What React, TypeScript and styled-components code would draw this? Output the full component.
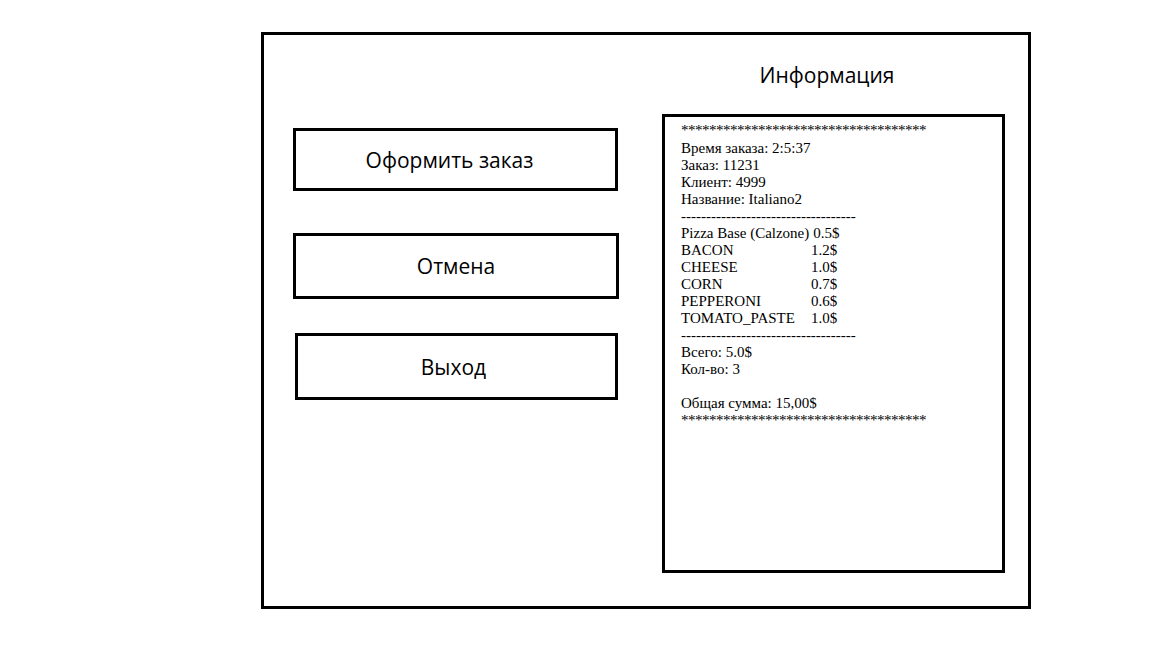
import React from "react";
import styled, { createGlobalStyle } from "styled-components";

const Global = createGlobalStyle`
  html, body { margin: 0; padding: 0; background: #ffffff; }
  body { font-family: "Open Sans", "Noto Sans", sans-serif; color: #000; }
`;

const Page = styled.div`
  width: 1152px;
  height: 648px;
  box-sizing: border-box;
  padding: 32px 0 0 261px;
`;

const Frame = styled.div`
  width: 770px;
  height: 577px;
  box-sizing: border-box;
  border: 3px solid #000;
  padding: 0 23px 33px 29px;
  display: flex;
  justify-content: space-between;
`;

const LeftColumn = styled.div`
  width: 326px;
  padding-top: 93px;
  display: flex;
  flex-direction: column;
`;

const ActionButton = styled.div<{
  $h: number;
  $top: number;
  $indent?: number;
  $w?: number;
  $shift?: number;
}>`
  box-sizing: border-box;
  height: ${(p) => p.$h}px;
  margin-top: ${(p) => p.$top}px;
  margin-left: ${(p) => p.$indent ?? 0}px;
  width: ${(p) => p.$w ?? 325}px;
  padding-right: ${(p) => p.$shift ?? 0}px;
  border: 3px solid #000;
  display: flex;
  align-items: center;
  justify-content: center;
  font-family: "Open Sans", "Noto Sans", sans-serif;
  font-size: 21px;
  color: #000;
`;

const RightColumn = styled.div`
  width: 343px;
  display: flex;
  flex-direction: column;
`;

const Title = styled.div`
  height: 79px;
  box-sizing: border-box;
  padding: 27px 13px 0 0;
  text-align: center;
  font-family: "Open Sans", "Noto Sans", sans-serif;
  font-size: 21px;
  line-height: 26px;
`;

const Receipt = styled.div`
  flex: 1;
  box-sizing: border-box;
  border: 3px solid #000;
  padding: 5px 0 0 16px;
  font-family: "Liberation Serif", "Times New Roman", serif;
  font-size: 15px;
  line-height: 17px;
`;

const Line = styled.div<{ $tight?: boolean; $after?: number }>`
  white-space: pre;
  min-height: 17px;
  letter-spacing: ${(p) => (p.$tight ? "-0.5px" : "normal")};
  margin-bottom: ${(p) => p.$after ?? 0}px;
`;

const ItemRow = styled.div`
  display: flex;
  white-space: pre;
`;

const ItemName = styled.span`
  min-width: 130px;
  padding-right: 4px;
  box-sizing: border-box;
`;

const items: [string, string][] = [
  ["Pizza Base (Calzone)", "0.5$"],
  ["BACON", "1.2$"],
  ["CHEESE", "1.0$"],
  ["CORN", "0.7$"],
  ["PEPPERONI", "0.6$"],
  ["TOMATO_PASTE", "1.0$"],
];

const stars = "*".repeat(35);
const dashes = "-".repeat(35);

export default function App() {
  return (
    <>
      <Global />
      <Page>
        <Frame>
          <LeftColumn>
            <ActionButton $h={63} $top={0} $shift={12}>Оформить заказ</ActionButton>
            <ActionButton $h={66} $top={42} $w={326}>Отмена</ActionButton>
            <ActionButton $h={67} $top={34} $indent={2} $w={323} $shift={6}>Выход</ActionButton>
          </LeftColumn>
          <RightColumn>
            <Title>Информация</Title>
            <Receipt>
              <Line $tight $after={1}>{stars}</Line>
              <Line>Время заказа: 2:5:37</Line>
              <Line>Заказ: 11231</Line>
              <Line>Клиент: 4999</Line>
              <Line>Название: Italiano2</Line>
              <Line>{dashes}</Line>
              {items.map(([n, p]) => (
                <ItemRow key={n}>
                  <ItemName>{n}</ItemName>
                  <span>{p}</span>
                </ItemRow>
              ))}
              <Line>{dashes}</Line>
              <Line>Всего: 5.0$</Line>
              <Line>Кол-во: 3</Line>
              <Line> </Line>
              <Line>Общая сумма: 15,00$</Line>
              <Line $tight>{stars}</Line>
            </Receipt>
          </RightColumn>
        </Frame>
      </Page>
    </>
  );
}
